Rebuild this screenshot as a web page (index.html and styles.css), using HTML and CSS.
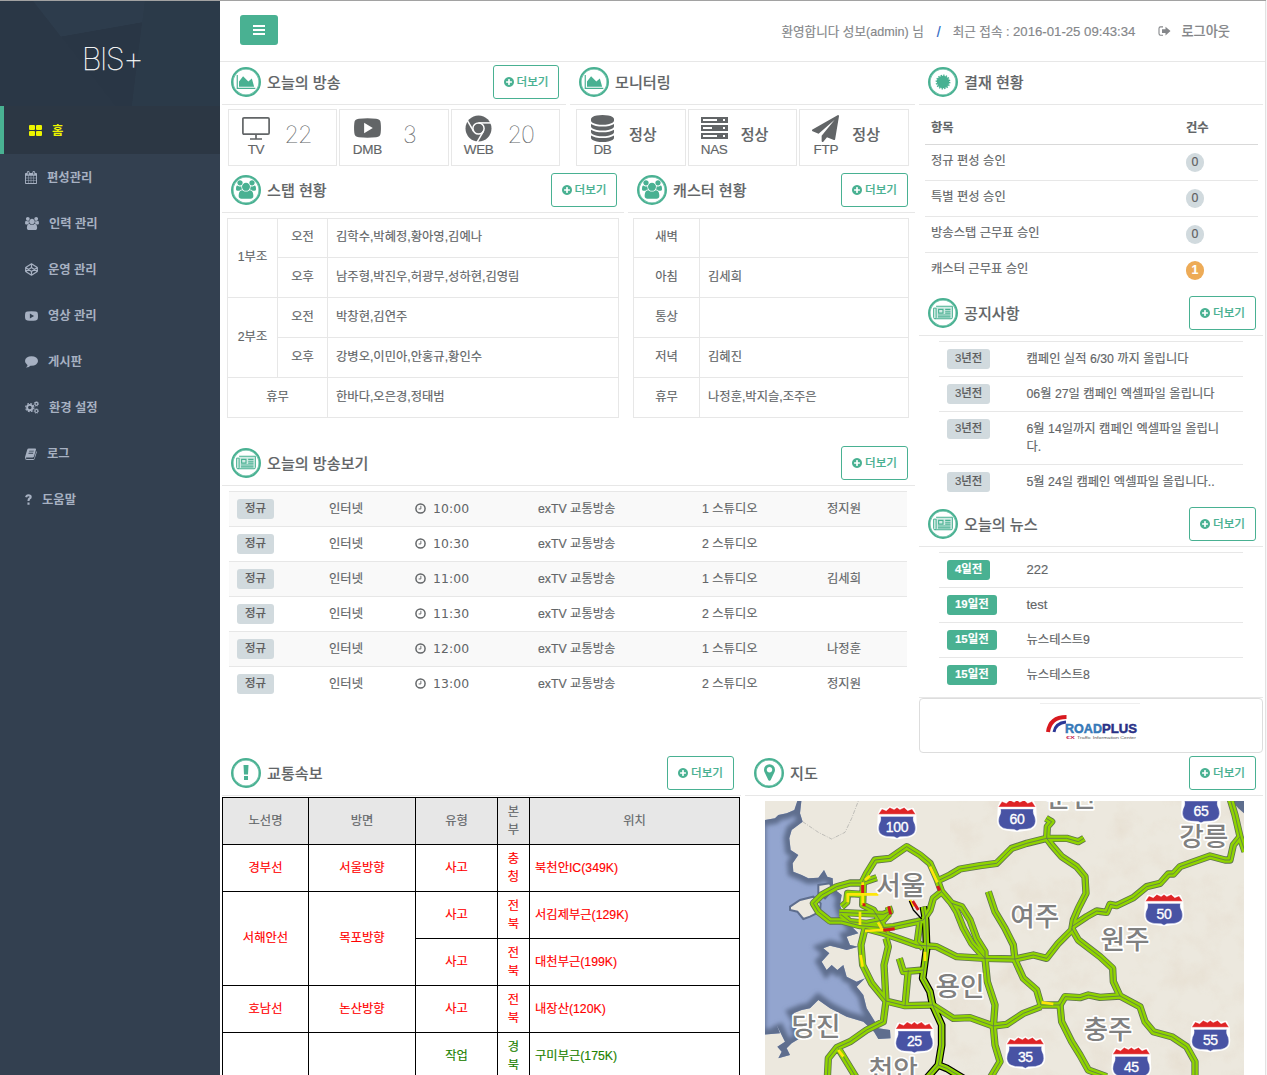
FILE: index.html
```html
<!DOCTYPE html>
<html lang="ko">
<head>
<meta charset="utf-8">
<title>BIS+</title>
<link rel="stylesheet" href="styles.css">
</head>
<body>
<svg class="sprite" aria-hidden="true">
  <symbol id="plus" viewBox="128 128 1536 1536"><path d="M1344 960v-128q0-26-19-45t-45-19h-256v-256q0-26-19-45t-45-19h-128q-26 0-45 19t-19 45v256h-256q-26 0-45 19t-19 45v128q0 26 19 45t45 19h256v256q0 26 19 45t45 19h128q26 0 45-19t19-45v-256h256q26 0 45-19t19-45zm320-64q0 209-103 385.5t-279.5 279.5-385.5 103-385.5-103-279.5-279.5-103-385.5 103-385.5 279.5-279.5 385.5-103 385.5 103 279.5 279.5 103 385.5z"/></symbol>
  <symbol id="area" viewBox="0 128 2048 1536"><path d="M2048 1536v128H0V128h128v1408zM1664 512l256 896H256V832l448-576 576 576z"/></symbol>
  <symbol id="users" viewBox="0 0 1920 1792"><path d="M593 896q-162 5-265 128h-134q-82 0-138-40.5t-56-118.5q0-353 124-353 6 0 43.5 21t97.5 42.5 119 21.5q67 0 133-23-5 37-5 66 0 139 81 256zm1071 637q0 120-73 189.5t-194 69.5h-874q-121 0-194-69.5t-73-189.5q0-53 3.5-103.5t14-109 26.5-108.5 43-97.5 62-81 85.5-53.5 111.5-20q10 0 43 21.5t73 48 107 48 135 21.5 135-21.5 107-48 73-48 43-21.5q61 0 111.5 20t85.5 53.5 62 81 43 97.5 26.5 108.5 14 109 3.5 103.5zm-1024-1277q0 106-75 181t-181 75-181-75-75-181 75-181 181-75 181 75 75 181zm704 384q0 159-112.5 271.5t-271.5 112.5-271.5-112.5-112.5-271.5 112.5-271.5 271.5-112.5 271.5 112.5 112.5 271.5zm576 225q0 78-56 118.5t-138 40.5h-134q-103-123-265-128 81-117 81-256 0-29-5-66 66 23 133 23 59 0 119-21.5t97.5-42.5 43.5-21q124 0 124 353zm-128-609q0 106-75 181t-181 75-181-75-75-181 75-181 181-75 181 75 75 181z"/></symbol>
  <symbol id="calendar" viewBox="64 0 1664 1792"><path d="M192 1664h288v-288h-288v288zm352 0h320v-288h-320v288zm-352-352h288v-320h-288v320zm352 0h320v-320h-320v320zm-352-384h288v-288h-288v288zm736 736h320v-288h-320v288zm-384-736h320v-288h-320v288zm768 736h288v-288h-288v288zm-384-352h320v-320h-320v320zm-352-864v-288q0-13-9.5-22.5t-22.5-9.5h-64q-13 0-22.5 9.5t-9.5 22.5v288q0 13 9.5 22.5t22.5 9.5h64q13 0 22.5-9.5t9.5-22.5zm736 864h288v-320h-288v320zm-384-384h320v-288h-320v288zm384 0h288v-288h-288v288zm32-480v-288q0-13-9.5-22.5t-22.5-9.5h-64q-13 0-22.5 9.5t-9.5 22.5v288q0 13 9.5 22.5t22.5 9.5h64q13 0 22.5-9.5t9.5-22.5zm384-64v1280q0 52-38 90t-90 38h-1408q-52 0-90-38t-38-90v-1280q0-52 38-90t90-38h128v-96q0-66 47-113t113-47h64q66 0 113 47t47 113v96h384v-96q0-66 47-113t113-47h64q66 0 113 47t47 113v96h128q52 0 90 38t38 90z"/></symbol>
  <symbol id="news" viewBox="0 0 32 22"><path fill="#49b192" fill-opacity=".25" d="M5 1h26v20H2V4h3z"/><path fill="none" stroke="currentColor" stroke-width="1.6" d="M5 1h26v18a2 2 0 0 1-2 2H3a2 2 0 0 1-2-2V4h4v15a2 2 0 0 1-2 2"/><path fill="none" stroke="currentColor" stroke-width="1.8" d="M9 6h7v6H9zM19.500 6H28M19.500 9H28M19.500 12H28M8 15H28M8 18H28"/></symbol>
  <symbol id="play" viewBox="0 0 28 20"><path fill-rule="evenodd" d="M5 .4Q14-.4 23 .4q4.500.3 4.700 4.600.5 5 0 10-.2 4.300-4.700 4.600-9 .8-18 0Q.5 19.300.3 15q-.5-5 0-10Q.5.700 5 .4ZM10.500 4.500v11l9-5.500Z"/></symbol>
  <symbol id="clock" viewBox="0 0 12 12"><circle cx="6" cy="6" r="5" fill="none" stroke="currentColor" stroke-width="1.600"/><path d="M6.400 3v3.500H4" fill="none" stroke="currentColor"/></symbol>
  <symbol id="database" viewBox="128 0 1536 1792"><path d="M896 768q237 0 443-43t325-127v170q0 69-103 128t-280 93.5-385 34.5-385-34.5-280-93.5-103-128v-170q119 84 325 127t443 43zm0 768q237 0 443-43t325-127v170q0 69-103 128t-280 93.5-385 34.5-385-34.5-280-93.5-103-128v-170q119 84 325 127t443 43zm0-384q237 0 443-43t325-127v170q0 69-103 128t-280 93.5-385 34.5-385-34.5-280-93.5-103-128v-170q119 84 325 127t443 43zm0-1152q208 0 385 34.5t280 93.5 103 128v128q0 69-103 128t-280 93.500-385 34.500-385-34.500-280-93.500-103-128v-128q0-69 103-128t280-93.500 385-34.500z"/></symbol>
  <symbol id="plane" viewBox="0 0 1792 1792"><path d="M1764 11q33 24 27 64l-256 1536q-5 29-32 45-14 8-31 8-11 0-24-5l-453-185-242 295q-18 23-49 23-13 0-22-4-19-7-30.5-23.5t-11.500-36.500v-349l864-1059-1069 925-395-162q-37-14-40-55-2-40 32-59l1664-960q15-9 32-9 20 0 36 11z"/></symbol>
  <symbol id="pin" viewBox="384 128 1024 1536"><path d="M1152 640q0-106-75-181t-181-75-181 75-75 181 75 181 181 75 181-75 75-181zm256 0q0 109-33 179l-364 774q-16 33-47.500 52t-67.500 19-67.500-19-46.500-52l-365-774q-33-70-33-179 0-212 150-362t362-150 362 150 150 362z"/></symbol>
  <symbol id="shield" viewBox="-55 -46 110 93" overflow="visible"><path fill="#fff" stroke="#fff" stroke-width="8" stroke-linejoin="round" d="M-50-24-44-38-28-35-20-42-8-37 0-42 8-37 20-42 28-35 44-38 50-24 51 5Q56 34 30 38L0 42-30 38Q-56 34-51 5Z"/><path fill="#df2426" d="M-52-24-42-39-30-34-20-43-8-37 0-43 8-37 20-43 30-34 42-39 52-24Z"/><path fill="#4853a4" d="M-46-18H46Q43-8 50 4 58 34 28 38L8 39 0 43-8 39-28 38Q-58 34-50 4-43-8-46-18Z"/></symbol>
</svg>
<div class="page">
  <nav class="sidebar">
    <div class="brand">BIS<span class="cross">+</span></div>
    <ul class="menu">
      <li class="active"><svg width="13" height="12" viewBox="0 0 13 12"><path d="M1 0h4q1 0 1 1v3q0 1-1 1H1Q0 5 0 4V1Q0 0 1 0ZM8 0h4q1 0 1 1v3q0 1-1 1H8Q7 5 7 4V1q0-1 1-1ZM1 6h4q1 0 1 1v3q0 1-1 1H1q-1 0-1-1V7q0-1 1-1ZM8 6h4q1 0 1 1v3q0 1-1 1H8q-1 0-1-1V7q0-1 1-1Z"/></svg>홈</li>
      <li><svg width="12" height="13"><use href="#calendar"/></svg>편성관리</li>
      <li><svg width="14" height="13"><use href="#users"/></svg>인력 관리</li>
      <li><svg width="13" height="13" viewBox="0 0 13 13"><path fill="none" stroke="currentColor" stroke-width="1.200" stroke-linejoin="round" d="M6.500.8 12.300 4.500v4L6.500 12.200.7 8.500v-4ZM6.500.8v3.700M6.500 8.500v3.700M.7 4.500l5.800 4 5.800-4M.7 8.500l5.800-4 5.800 4"/></svg>운영 관리</li>
      <li><svg width="13" height="10"><use href="#play"/></svg>영상 관리</li>
      <li><svg width="13" height="12" viewBox="0 0 13 12"><ellipse cx="6.500" cy="5" rx="6.500" ry="4.800"/><path d="M2.500 7.500Q3 10.500 1 11.600q3 .2 5-2.600Z"/></svg>게시판</li>
      <li><svg width="14" height="13" viewBox="0 0 14 13"><g fill="none" stroke="currentColor"><circle cx="4.800" cy="6.600" r="2.700" stroke-width="1.900"/><circle cx="4.800" cy="6.600" r="4.100" stroke-width="1.200" stroke-dasharray="1.800 1.420"/><circle cx="11.400" cy="2.800" r="1.500" stroke-width="1.200"/><circle cx="11.400" cy="2.800" r="2.300" stroke-width=".7" stroke-dasharray="1 .8"/><circle cx="11.400" cy="10" r="1.500" stroke-width="1.200"/><circle cx="11.400" cy="10" r="2.300" stroke-width=".7" stroke-dasharray="1 .8"/></g></svg>환경 설정</li>
      <li><svg width="12" height="12" viewBox="0 0 12 12"><path fill-rule="evenodd" d="M3.800.5h6.400q1 .1.800 1.100L9 8.600q-.3.800-1.200.8H1.500q-1 0-.8.900.2.800 1.300.8h6.200q.8 0 1-.7l2-7.200q.7.400.5 1.200l-2 6.400q-.3 1.100-1.500 1.200H2Q0 12 0 10q-.1-.6.2-1.600l2-6.600Q2.500.5 3.800.5ZM4.300 2.700 4 3.600h4.600l.3-.9ZM3.700 4.800l-.3.900H8l.3-.9Z"/></svg>로그</li>
      <li><svg width="7" height="11" viewBox="0 0 7 11"><path fill="none" stroke="currentColor" stroke-width="2.100" d="M1.100 3.300Q1.500 1.200 3.400 1.200q2.300 0 2.300 1.700 0 1-1.200 1.600-1 .6-1 2.400M3.500 8.500v2.200"/></svg>도움말</li>
    </ul>
  </nav>
  <main class="main">
    <header class="topbar">
      <button class="toggle"><svg width="12" height="10" viewBox="0 0 12 10"><path fill="none" stroke="#fff" stroke-width="2" d="M0 1h12M0 5h12M0 9h12"/></svg></button>
      <div class="account"><span>환영합니다 성보(admin) 님</span><i class="slash">/</i><span class="last">최근 접속 : <span class="en">2016-01-25 09:43:34</span></span><svg width="13" height="11" viewBox="0 0 13 11"><path fill="none" stroke="currentColor" stroke-width="1.100" d="M5 .9H2.500Q1 .9 1 2.400v5.200Q1 9.300 2.500 9.300H5"/><path d="M4 3.300h3.500V.7l5 4.400-5 4.400V6.900H4Z"/></svg><span class="logout">로그아웃</span></div>
    </header>

    <div class="upper">
      <div class="left">
        <div class="pair even">
          <section><div class="title"><span class="ring"><svg width="20" height="14"><use href="#area"/></svg></span><h5>오늘의 방송</h5><a class="more"><svg width="10" height="10"><use href="#plus"/></svg>더보기</a></div>
            <div class="tiles">
              <div class="tile"><div class="ico"><svg width="28" height="23" viewBox="0 0 28 23"><path fill="none" stroke="currentColor" stroke-width="1.700" d="M2 .9h24q1.100 0 1.100 1.100v14q0 1.100-1.100 1.100H2Q.9 17.100.9 16V2Q.9.900 2 .9ZM14 17v5M8 22h12"/></svg><b>TV</b></div><span class="num">22</span></div>
              <div class="tile"><div class="ico"><svg width="27" height="20"><use href="#play"/></svg><b>DMB</b></div><span class="num">3</span></div>
              <div class="tile"><div class="ico"><svg width="27" height="27" viewBox="-13.500 -13.500 27 27"><circle r="13"/><g fill="none" stroke="#fff" stroke-width="1.500"><circle r="5.600"/><path id="arm" d="M0-5.600H13"/><use href="#arm" transform="rotate(120)"/><use href="#arm" transform="rotate(240)"/></g></svg><b>WEB</b></div><span class="num">20</span></div>
            </div></section>
          <section><div class="title"><span class="ring"><svg width="20" height="14"><use href="#area"/></svg></span><h5>모니터링</h5></div>
            <div class="tiles">
              <div class="tile"><div class="ico narrow"><svg width="23" height="27"><use href="#database"/></svg><b>DB</b></div><span class="ok">정상</span></div>
              <div class="tile"><div class="ico narrow"><svg width="27" height="22" viewBox="0 0 27 22"><path fill-rule="evenodd" d="M0 0h27v6H0ZM2 2v2h14V2ZM22 2v2h2V2ZM0 8h27v6H0Zm2 2v2h9v-2Zm20 0v2h2v-2ZM0 16h27v6H0Zm2 2v2h14v-2Zm20 0v2h2v-2Z"/></svg><b>NAS</b></div><span class="ok">정상</span></div>
              <div class="tile"><div class="ico narrow"><svg width="27" height="27"><use href="#plane"/></svg><b>FTP</b></div><span class="ok">정상</span></div>
            </div></section>
        </div>
        <div class="pair staff">
          <section><div class="title"><span class="ring"><svg width="20" height="19"><use href="#users"/></svg></span><h5>스탭 현황</h5><a class="more"><svg width="10" height="10"><use href="#plus"/></svg>더보기</a></div>
            <table class="roster"><colgroup><col class="c50"><col class="c50"><col></colgroup>
              <tr class="r1"><td rowspan="2">1부조</td><td>오전</td><td class="names">김학수,박혜정,황아영,김예나</td></tr>
              <tr><td>오후</td><td class="names">남주형,박진우,허광무,성하현,김영림</td></tr>
              <tr><td rowspan="2">2부조</td><td>오전</td><td class="names">박창현,김연주</td></tr>
              <tr><td>오후</td><td class="names">강병오,이민아,안홍규,황인수</td></tr>
              <tr><td colspan="2">휴무</td><td class="names">한바다,오은경,정태범</td></tr>
            </table></section>
          <section><div class="title"><span class="ring"><svg width="20" height="19"><use href="#users"/></svg></span><h5>캐스터 현황</h5><a class="more"><svg width="10" height="10"><use href="#plus"/></svg>더보기</a></div>
            <table class="roster caster"><colgroup><col class="c66"><col></colgroup>
              <tr class="r1"><td>새벽</td><td class="names"></td></tr>
              <tr><td>아침</td><td class="names">김세희</td></tr>
              <tr><td>통상</td><td class="names"></td></tr>
              <tr><td>저녁</td><td class="names">김혜진</td></tr>
              <tr><td>휴무</td><td class="names">나정훈,박지슬,조주은</td></tr>
            </table></section>
        </div>
        <section class="today"><div class="title"><span class="ring"><svg width="20" height="15"><use href="#news"/></svg></span><h5>오늘의 방송보기</h5><a class="more"><svg width="10" height="10"><use href="#plus"/></svg>더보기</a></div>
          <div class="shows">
            <div><span class="tag">정규</span><span>인터넷</span><span class="time"><svg width="11" height="11"><use href="#clock"/></svg>10:00</span><span>exTV 교통방송</span><span>1 스튜디오</span><span>정지원</span></div>
            <div><span class="tag">정규</span><span>인터넷</span><span class="time"><svg width="11" height="11"><use href="#clock"/></svg>10:30</span><span>exTV 교통방송</span><span>2 스튜디오</span></div>
            <div><span class="tag">정규</span><span>인터넷</span><span class="time"><svg width="11" height="11"><use href="#clock"/></svg>11:00</span><span>exTV 교통방송</span><span>1 스튜디오</span><span>김세희</span></div>
            <div><span class="tag">정규</span><span>인터넷</span><span class="time"><svg width="11" height="11"><use href="#clock"/></svg>11:30</span><span>exTV 교통방송</span><span>2 스튜디오</span></div>
            <div><span class="tag">정규</span><span>인터넷</span><span class="time"><svg width="11" height="11"><use href="#clock"/></svg>12:00</span><span>exTV 교통방송</span><span>1 스튜디오</span><span>나정훈</span></div>
            <div><span class="tag">정규</span><span>인터넷</span><span class="time"><svg width="11" height="11"><use href="#clock"/></svg>13:00</span><span>exTV 교통방송</span><span>2 스튜디오</span><span>정지원</span></div>
          </div></section>
      </div>

      <aside class="right">
        <section class="approve"><div class="title"><span class="ring"><svg width="16" height="16" viewBox="-8 -8 16 16"><circle r="6.200"/><circle r="6.600" fill="none" stroke="currentColor" stroke-width="1.600" stroke-dasharray="1.400 1.192"/></svg></span><h5>결재 현황</h5></div>
          <div class="counts">
            <div class="head"><span>항목</span><span>건수</span></div>
            <div><span>정규 편성 승인</span><i>0</i></div>
            <div><span>특별 편성 승인</span><i>0</i></div>
            <div><span>방송스탭 근무표 승인</span><i>0</i></div>
            <div><span>캐스터 근무표 승인</span><i class="warn">1</i></div>
          </div></section>
        <section class="notice"><div class="title"><span class="ring"><svg width="20" height="15"><use href="#news"/></svg></span><h5>공지사항</h5><a class="more"><svg width="10" height="10"><use href="#plus"/></svg>더보기</a></div>
          <div class="feed">
            <div><span class="tag">3년전</span><p>캠페인 실적 6/30 까지 올립니다</p></div>
            <div><span class="tag">3년전</span><p>06월 27일 캠페인 엑셀파일 올립니다</p></div>
            <div><span class="tag">3년전</span><p>6월 14일까지 캠페인 엑셀파일 올립니다.</p></div>
            <div><span class="tag">3년전</span><p>5월 24일 캠페인 엑셀파일 올립니다..</p></div>
          </div></section>
        <section class="newsbox"><div class="title"><span class="ring"><svg width="20" height="15"><use href="#news"/></svg></span><h5>오늘의 뉴스</h5><a class="more"><svg width="10" height="10"><use href="#plus"/></svg>더보기</a></div>
          <div class="feed">
            <div><span class="tag on">4일전</span><p class="en">222</p></div>
            <div><span class="tag on">19일전</span><p class="en">test</p></div>
            <div><span class="tag on">15일전</span><p>뉴스테스트9</p></div>
            <div><span class="tag on">15일전</span><p>뉴스테스트8</p></div>
          </div></section>
        <div class="partner"><svg width="100" height="46" viewBox="0 0 100 46"><path d="M0 .5h100" stroke="#eee"/><path fill="none" stroke="#d8191f" stroke-width="4" d="M8 29Q10 14 26.500 14"/><path fill="none" stroke="#2b3796" stroke-width="3" d="M14 29Q15.500 20 26 19"/><g font-family="Liberation Sans, sans-serif" font-weight="bold"><text x="25" y="30" font-size="13" fill="#3579b8" stroke="#3579b8" stroke-width=".5" textLength="37" lengthAdjust="spacingAndGlyphs">ROAD</text><text x="62" y="30" font-size="13" fill="#2a3186" stroke="#2a3186" stroke-width=".5" textLength="35" lengthAdjust="spacingAndGlyphs">PLUS</text><text x="26" y="36" font-size="4" fill="#c8204c" textLength="9" lengthAdjust="spacingAndGlyphs">€X</text><text x="37" y="36" font-size="4" font-weight="normal" fill="#555" textLength="59" lengthAdjust="spacingAndGlyphs">Traffic Information Center</text></g></svg></div>
      </aside>
    </div>

    <div class="lower">
      <section><div class="title"><span class="ring"><svg width="6" height="15" viewBox="0 0 6 15"><path d="M.5 0h5L5 9.500H1ZM1 11h4v4H1Z"/></svg></span><h5>교통속보</h5><a class="more"><svg width="10" height="10"><use href="#plus"/></svg>더보기</a></div>
        <table class="traffic"><colgroup><col class="w86"><col class="w107"><col class="w82"><col class="w32"><col></colgroup>
          <tr class="th"><td>노선명</td><td>방면</td><td>유형</td><td>본부</td><td class="c">위치</td></tr>
          <tr><td>경부선</td><td>서울방향</td><td>사고</td><td>충청</td><td>북천안IC(349K)</td></tr>
          <tr><td rowspan="2">서해안선</td><td rowspan="2">목포방향</td><td>사고</td><td>전북</td><td>서김제부근(129K)</td></tr>
          <tr><td>사고</td><td>전북</td><td>대천부근(199K)</td></tr>
          <tr><td>호남선</td><td>논산방향</td><td>사고</td><td>전북</td><td>내장산(120K)</td></tr>
          <tr class="work"><td></td><td></td><td>작업</td><td>경북</td><td>구미부근(175K)</td></tr>
        </table></section>
      <section><div class="title"><span class="ring"><svg width="11" height="17"><use href="#pin"/></svg></span><h5>지도</h5><a class="more"><svg width="10" height="10"><use href="#plus"/></svg>더보기</a></div>
        <svg class="map" width="479" height="274" viewBox="45 18 1437 822">
          <defs>
            <filter id="soft"><feGaussianBlur stdDeviation="6"/></filter>
            <filter id="relief" x="0" y="0" width="1" height="1"><feTurbulence type="fractalNoise" baseFrequency=".012" numOctaves="5" seed="8"/><feColorMatrix values="0 0 0 0 .77  0 0 0 0 .69  0 0 0 0 .58  2.200 0 0 0 -.95"/></filter>
            <path id="sea" d="M30 78 75 70 85 60 110 55 133 45 142 18 155 10 150 55 158 80 125 105 118 130 122 165 145 180 128 205 130 230 155 240 175 250 205 248 222 225 232 245 248 250 250 280 275 300 270 330 280 360 310 400 325 415 290 425 300 450 325 455 290 465 265 458 240 452 220 460 238 475 215 500 230 525 245 510 262 525 280 510 290 545 320 560 345 550 320 575 340 600 350 640 375 680 385 700 420 705 422 730 385 732 372 710 340 680 290 665 240 640 205 615 180 640 155 645 130 655 150 690 140 700 150 730 125 745 110 760 120 780 85 790 95 770 82 755 105 740 80 690 90 715 30 720Z"/>
            <clipPath id="seaclip"><use href="#sea"/></clipPath>
            <g id="roads">
              <path d="M335 265 350 235 375 195 420 190 470 155 510 180 540 205 560 250 575 290 605 325 635 335 660 375 680 430 705 470 705 490 712 560 735 630 730 695 735 750 750 800 720 850"/>
              <path d="M605 325 620 350 640 400 665 445 705 490"/>
              <path d="M335 264 300 264 260 275 215 300 190 325 205 350 240 378 275 378 330 392 400 398 430 395 500 380 520 375 540 345 550 310 575 290"/>
              <path d="M268 352 330 355 400 358 420 350 415 335M272 358 300 380 350 385 400 375 418 355M275 335 290 322 293 295 335 298M380 248 340 262 338 330 370 345 395 385 410 415"/>
              <path d="M568 255 600 240 630 222 690 212 740 205 765 180 785 160 830 145 890 130 950 130 985 140 1002 130M890 130 892 95 905 80 888 70"/>
              <path d="M890 130 905 150 935 185 980 215 1005 245 1008 295 985 340 970 375 965 405 925 445 890 490 850 480 795 492 705 490 620 485 560 455 500 450 450 432 400 415 345 400"/>
              <path d="M715 290 735 350 765 400 790 450 795 495 820 550 860 585 873 630 930 630 935 680 965 740 990 780 1015 825 1070 845"/>
              <path d="M548 630 610 670 660 668 730 693 770 688 820 655 873 635M930 630 945 605 990 608 1015 600 1050 607 1110 603"/>
              <path d="M965 400 985 435 1050 485 1088 520 1090 560 1110 603 1170 635 1185 680 1210 710 1265 725 1310 755 1335 800 1335 850"/>
              <path d="M965 395 1010 365 1040 348 1070 352 1080 328 1100 332 1150 308 1190 275 1230 265 1255 237 1270 237 1290 215 1380 183 1425 195 1440 195 1450 150 1470 125 1455 60 1440 10M1470 125 1485 170"/>
              <path d="M510 380 502 440 520 460M345 400 333 450 338 510 365 565 408 618 465 632 548 630M408 430 415 455 402 510 408 618 400 680 350 705 300 740 260 758 235 790 232 850M265 760 320 850M448 490 460 530 520 525M475 525 465 632"/>
            </g>
            <path id="spine" d="M520 335 527 375 530 460 518 550 540 590 548 630 575 690 575 750 565 810 590 820 640 850M565 810 530 850"/>
          </defs>
          <path fill="#ece8de" d="M45 18H1482V840H45Z"/>
          <rect x="600" y="18" width="882" height="822" filter="url(#relief)" opacity=".45"/>
          <use href="#sea" fill="#93a5cf"/>
          <g clip-path="url(#seaclip)"><use href="#sea" fill="none" stroke="#5e6e8e" stroke-width="34" filter="url(#soft)"/></g>
          <path fill="#ece8de" stroke="#5e6e8e" stroke-width="6" d="M120 335 150 315 190 305 212 325 210 350 180 365 160 372 142 350 120 345ZM205 270 240 265 248 285 225 310 205 295Z"/>
          <path fill="#5e6e8e" d="M1445 18H1482V55L1465 40Z"/>
          <path fill="none" stroke="#a8a8a4" stroke-width="2" stroke-dasharray="12 4 3 4" d="M158 80 205 112 245 132 285 112 305 70 325 18"/>
          <g fill="none" stroke-linejoin="round">
            <use href="#roads" stroke="#5f7350" stroke-width="22"/><use href="#spine" stroke="#000" stroke-width="23"/>
            <use href="#roads" stroke="#8fd400" stroke-width="17"/><use href="#spine" stroke="#8fd400" stroke-width="16"/>
            <use href="#roads" stroke="#5f7350" stroke-width="2.500"/><use href="#spine" stroke="#5f7350" stroke-width="2.500"/>
            <g stroke="#ffe60a" stroke-width="8"><path d="M385 298H293V322M338 262V330M330 350V390M540 215 562 262M332 480 338 515M384 382 397 405 345 408M265 765 280 785M875 622 910 627M525 470V498M345 255 360 242M480 315 490 335"/></g>
            <g stroke="#d3161d" stroke-width="9"><path d="M338 270V294M342 325V334M416 334 422 358M400 406 434 401M563 273 569 287M488 318 505 345"/></g>
            <path stroke="#000" stroke-width="4" d="M478 318 490 345 515 372"/>
          </g>
          <g class="town">
            <text x="452" y="299">서울</text><text x="963" y="36">춘천</text><text x="1361" y="152">강릉</text><text x="854" y="394">여주</text><text x="1125" y="461">원주</text><text x="630" y="604">용인</text><text x="198" y="722">당진</text><text x="430" y="852">천안</text><text x="1074" y="731">충주</text>
          </g>
          <g class="route">
            <use href="#shield" x="382" y="34" width="118" height="100"/><text x="441" y="110">100</text>
            <use href="#shield" x="742" y="12" width="118" height="100"/><text x="801" y="88">60</text>
            <use href="#shield" x="1294" y="-12" width="118" height="100"/><text x="1353" y="64">65</text>
            <use href="#shield" x="1183" y="295" width="118" height="100"/><text x="1242" y="371">50</text>
            <use href="#shield" x="434" y="678" width="118" height="100"/><text x="493" y="754">25</text>
            <use href="#shield" x="767" y="724" width="118" height="100"/><text x="826" y="800">35</text>
            <use href="#shield" x="1085" y="754" width="118" height="100"/><text x="1144" y="830">45</text>
            <use href="#shield" x="1322" y="673" width="118" height="100"/><text x="1381" y="749">55</text>
          </g>
        </svg></section>
    </div>
  </main>
</div>
</body>
</html>
```
FILE: styles.css
```css
* { box-sizing: border-box; }
body { margin: 0; background: #f6f6f7; color: #626567; font: 12.3px/18px "Liberation Sans", "Noto Sans CJK KR", sans-serif; }
svg { display: block; flex: none; fill: currentColor; }
.sprite { position: absolute; width: 0; height: 0; }
i { font-style: normal; }
p, h5, ul { margin: 0; padding: 0; }
.en { font-size: 13px; }
.page { display: flex; width: 1266px; height: 1075px; overflow: hidden; border-top: 1px solid #a2a2a2; }

.sidebar { width: 220px; flex: none; background: #334050; }
.brand { display: flex; justify-content: center; height: 105px; padding: 38px 0 0 4px; color: #fff; font: 100 31px/40px Inter, sans-serif; letter-spacing: -1.8px; -webkit-text-stroke: .25px #fff;
  background: linear-gradient(52deg, #2a3746 38%, transparent 38.3%), linear-gradient(97deg, transparent 62%, #2b3a49 62.3%), linear-gradient(170deg, #2d3c4c 32%, #293645 32.4%); }
.cross { font-size: 33px; line-height: 38px; }
.menu { list-style: none; color: #a7b1c2; font-weight: 700; }
.menu li { display: flex; align-items: center; gap: 10px; height: 46px; padding: 1px 0 0 25px; }
.menu .active { height: 48px; background: #2c3744; border-left: 4px solid #49b192; color: #ecf400; }

.main { flex: 1; min-width: 0; background: #fff; border-right: 1px solid #e2e2e2; -webkit-text-stroke: .15px; }
.topbar { display: flex; align-items: flex-start; justify-content: space-between; height: 61px; padding: 14px 35px 0 20px; border-bottom: 1px solid #e7e7e7; }
.toggle { display: flex; align-items: center; justify-content: center; width: 38px; height: 30px; padding: 0; border: 0; border-radius: 3px; background: #49b192; }
.account { display: flex; align-items: center; height: 33px; color: #85878a; font-size: 12.6px; }
.account .en { font-size: 13.2px; }
.slash { margin: 0 12px 0 13px; color: #2a66c4; font-size: 14px; }
.last { margin-right: 23px; }
.logout { margin-left: 10px; font-size: 13.2px; font-weight: 500; }

.upper { display: flex; gap: 4px; height: 691px; padding: 0 2px; }
.left { width: 693px; }
.right { width: 344px; }
.title { display: flex; height: 43px; padding: 3px 7px 0 9px; border-bottom: 1px solid #e7e7e7; }
.ring { display: flex; align-items: center; justify-content: center; width: 30px; height: 30px; margin-top: 2px; padding-bottom: 1px; border: 2px solid #49b192; border-radius: 50%; color: #49b192; box-shadow: inset 0 0 0 .5px #49b192; }
.title h5 { margin: 8px 0 0 6px; font-size: 15.1px; line-height: 20px; font-weight: 500; }
.more { display: flex; gap: 3px; align-items: center; justify-content: center; width: 67px; height: 34px; margin-left: auto; border: 1px solid #49b192; border-radius: 3px; color: #49b192; font-size: 11.6px; font-weight: 500; }
.even .more, .staff section:first-child .more { width: 66px; }
.pair { display: grid; column-gap: 4px; height: 108px; }
.even { grid-template-columns: 344px 345px; }
.staff { grid-template-columns: 402px 287px; height: 273px; }
.tiles { display: grid; grid-template-columns: repeat(3, 1fr); gap: 2px; padding: 4px 6px 0; }
.tile { display: flex; align-items: center; height: 57px; border: 1px solid #e7e7e7; }
.ico { display: flex; flex-direction: column; align-items: center; justify-content: space-between; width: 54px; height: 43px; margin-bottom: 6px; }
.ico.narrow { width: 51px; }
.ico svg { margin: auto 0; }
.ico b { font-size: 13.5px; line-height: 13px; font-weight: 400; letter-spacing: -.3px; }
.num { width: 30px; margin-top: -6px; text-align: center; font: 100 23.5px/28px Inter, sans-serif; letter-spacing: -1px; }
.ok { margin-top: -5px; padding-left: 1px; font-size: 15px; font-weight: 500; }

table { border-collapse: collapse; table-layout: fixed; }
td { padding: 0; }
.roster { width: calc(100% - 10px); margin: 5px 5px 0; }
.caster { width: calc(100% - 11px); }
.roster td { height: 40px; padding-bottom: 2px; border: 1px solid #e7e7e7; text-align: center; }
.roster .r1 td { height: 39px; }
.roster td.names { padding-left: 8px; text-align: left; }
.c50 { width: 50px; }
.c66 { width: 66px; }

.shows { padding: 5px 8px 0 7px; }
.shows > div { display: grid; grid-template-columns: 92px 86px 123px 164px 125px 1fr; height: 35px; padding: 8px 0 0 8px; border-top: 1px solid #e7e7e7; }
.shows > div:nth-child(odd) { background: #f9f9f9; }
.tag { justify-self: start; height: 20px; margin-top: -1px; padding: 0 8px; border-radius: 3px; background: #d1dade; color: #5e5e5e; font-size: 11.4px; line-height: 19px; font-weight: 500; }
.tag.on { background: #49b192; color: #fff; font-weight: 700; }
.time { display: flex; gap: 7px; font: 12.4px/18px "DejaVu Sans", sans-serif; letter-spacing: .1px; -webkit-text-stroke: 0; }
.time svg { margin-top: 3px; }

.approve { height: 231px; }
.counts { padding: 5px 5px 0 6px; }
.counts > div { display: grid; grid-template-columns: 255px 1fr; height: 36px; padding: 7px 0 0 6px; border-top: 1px solid #e7e7e7; }
.counts .head { height: 34px; padding-top: 9px; border-top: 0; font-weight: 700; }
.counts .head + div { border-top-color: #d9d9d9; }
.counts i { width: 18px; height: 19px; margin-top: 1px; border-radius: 10px; background: #d1dade; color: #5e5e5e; text-align: center; line-height: 19px; }
.counts i.warn { background: #edab57; color: #fff; font-weight: 700; }
.notice { height: 211px; }
.newsbox { height: 194px; border-bottom: 1px solid #e7e7e7; }
.feed { padding: 5px 20px 0; }
.feed > div { display: grid; grid-template-columns: 79px 1fr; padding: 8px 15px 8px 8px; border-top: 1px solid #e7e7e7; word-break: break-all; }
.feed .tag { margin-bottom: -2px; }
.feed p { padding-left: .5px; }
.partner { display: flex; justify-content: center; height: 55px; padding: 4px 2px 0 0; border: 1px solid #ddd; border-radius: 4px; -webkit-text-stroke: 0; }

.lower { display: grid; grid-template-columns: 519px 518px; gap: 4px; padding: 0 2px; }
.traffic { width: 518px; margin-top: 1px; color: #f00; }
.traffic td { height: 47px; padding: 0 10px 1px; border: 1px solid #000; text-align: center; word-break: break-all; }
.traffic td:last-child { padding: 0 5px 1px; text-align: left; }
.traffic td:nth-last-child(2) { padding: 0 9px 1px; }
.traffic .th td { background: #e7e7e7; color: #626567; }
.traffic .th td.c { text-align: center; }
.traffic .work { color: #1c8200; }
.w86 { width: 86px; }
.w107 { width: 107px; }
.w82 { width: 82px; }
.w32 { width: 32px; }
.map { margin: 5px 0 0 20px; }
.town { font: 500 80px "Noto Sans CJK KR", sans-serif; fill: #808080; stroke: #fff; stroke-width: 10px; stroke-linejoin: round; paint-order: stroke; text-anchor: middle; }
.route { font: 42px "Liberation Sans", sans-serif; fill: #fff; stroke: #fff; stroke-width: 1px; text-anchor: middle; letter-spacing: -1px; }
```
